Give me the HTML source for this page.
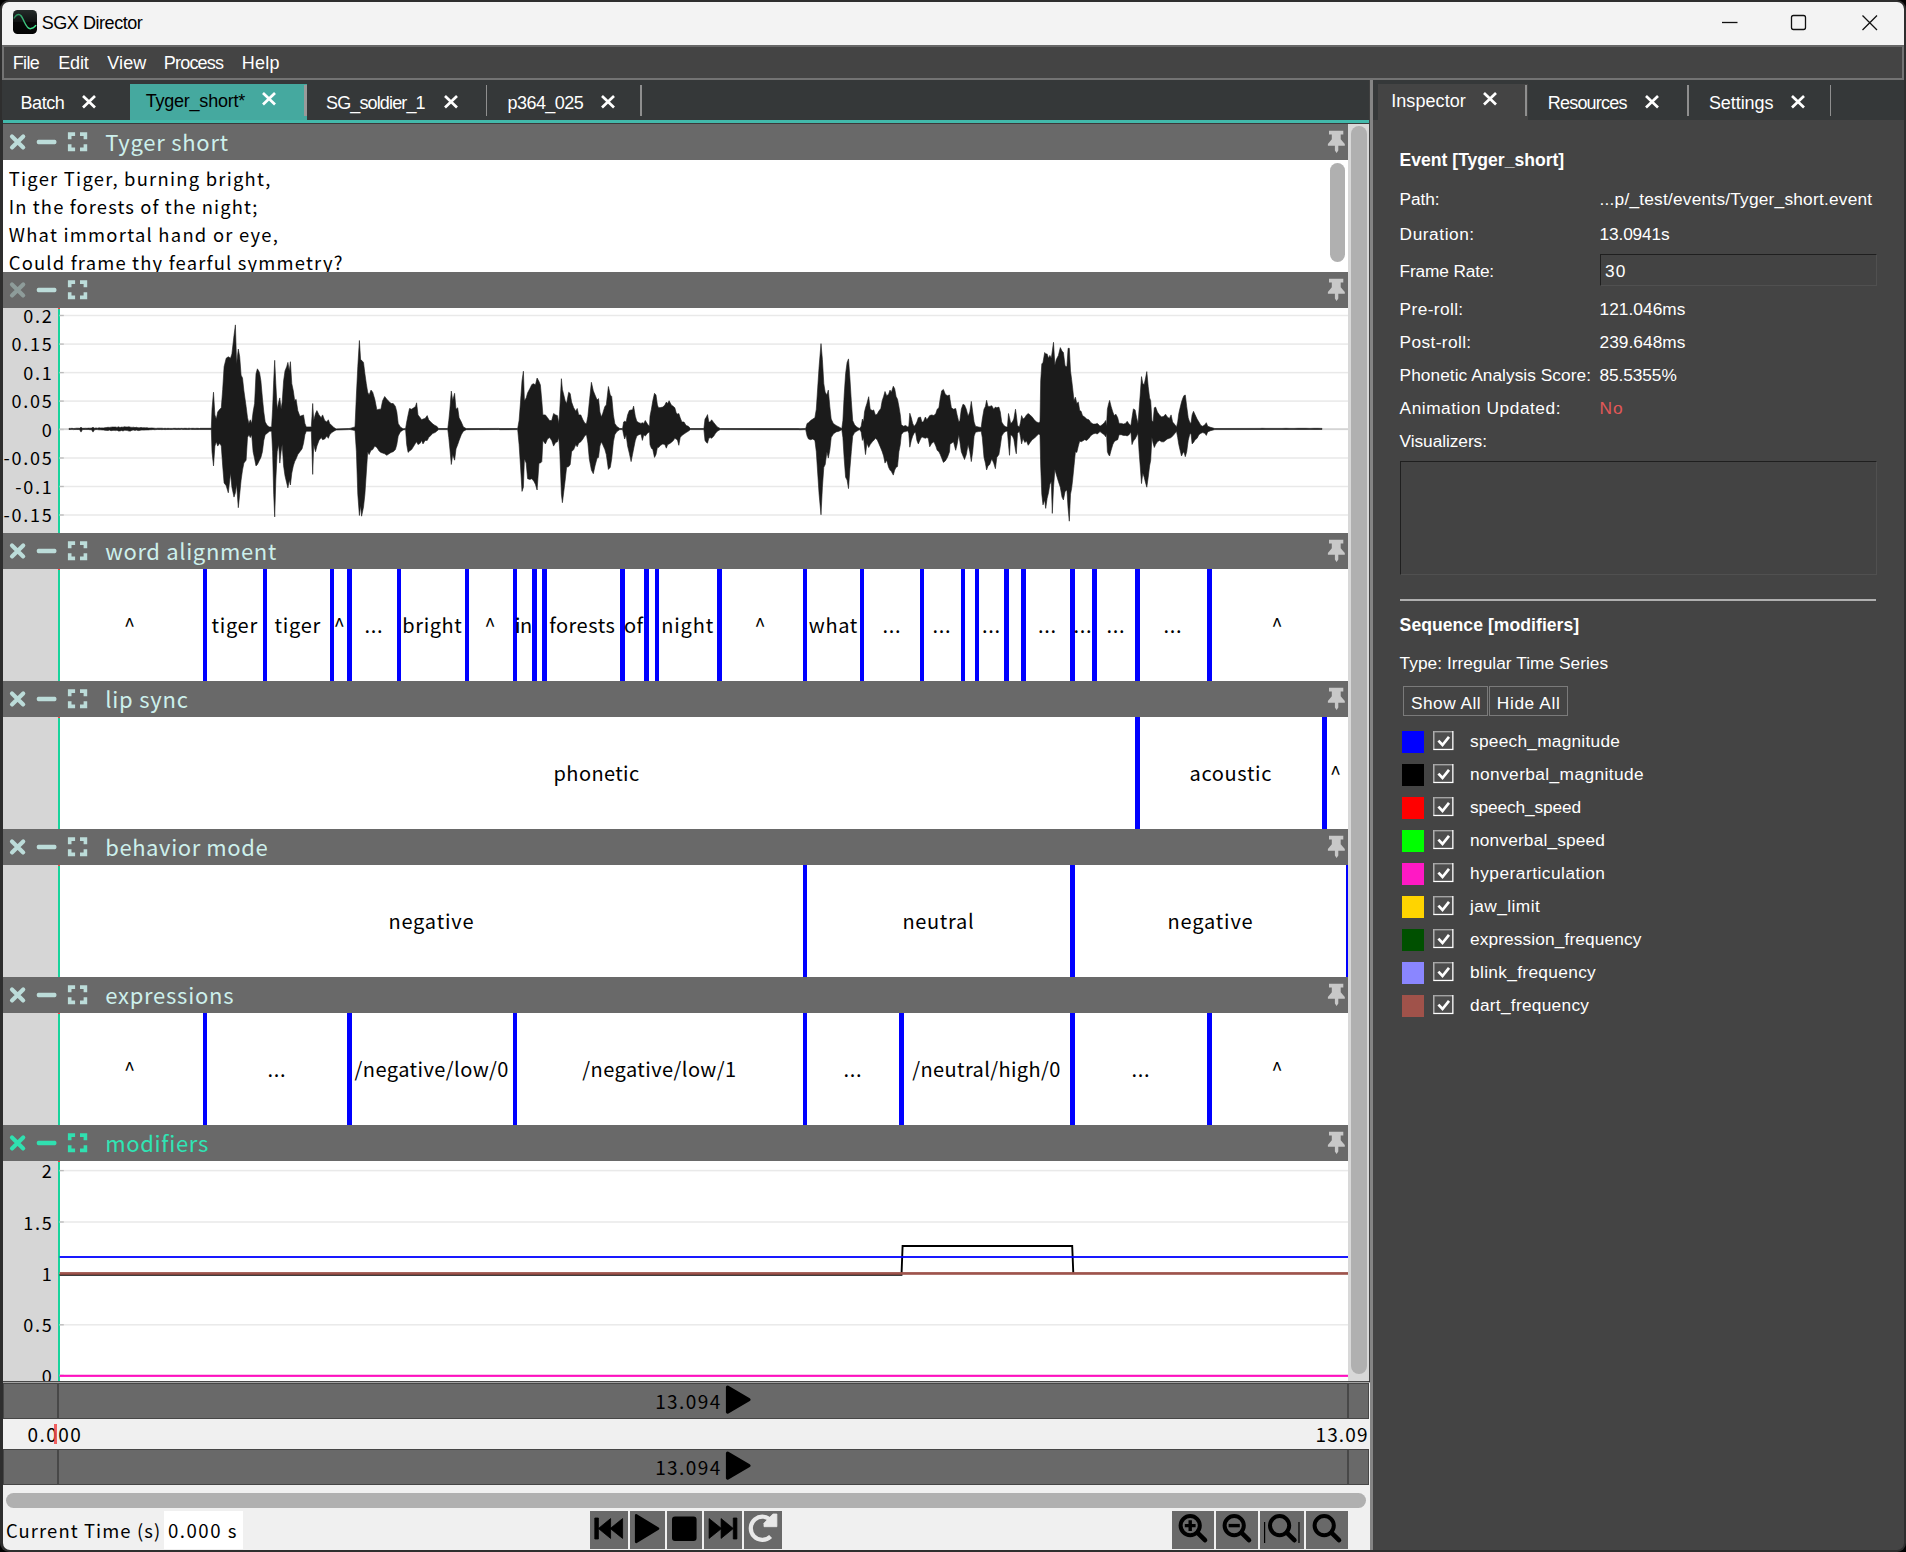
<!DOCTYPE html>
<html><head><meta charset="utf-8"><title>SGX Director</title><style>
html,body{margin:0;padding:0;background:#000;}
body{width:1906px;height:1552px;overflow:hidden;position:relative;font-family:'Liberation Sans',sans-serif;}
#win{position:absolute;left:0;top:0;width:1906px;height:1552px;background:#2e2e2e;border-radius:9px;overflow:hidden;}
.t{position:absolute;white-space:nowrap;}
</style></head><body>
<div id="win">
<div style="position:absolute;left:2px;top:2px;width:1902px;height:43px;background:#f3f3f3;border-radius:7px 7px 0 0;"></div>
<svg style="position:absolute;left:13px;top:9.9px" width="24" height="24" viewBox="0 0 24 24"><defs><linearGradient id="ig" x1="0" y1="0" x2="0" y2="1"><stop offset="0" stop-color="#252b2a"/><stop offset="0.48" stop-color="#101313"/><stop offset="0.5" stop-color="#070808"/><stop offset="1" stop-color="#030303"/></linearGradient><linearGradient id="sg" x1="0" y1="0" x2="1" y2="0"><stop offset="0" stop-color="#287f54"/><stop offset="0.5" stop-color="#3cc07c"/><stop offset="1" stop-color="#44ee92"/></linearGradient></defs><rect x="0" y="0" width="24" height="24" rx="4.6" fill="url(#ig)"/><path d="M0.9 8.5C2.5 5.5,4 4.4,5.7 4.4C8.5 4.4,9.8 8.5,11.2 11.7C12.8 15.2,14.3 18.7,17.3 18.7C19.5 18.7,21.3 17.2,23.1 15.1" fill="none" stroke="url(#sg)" stroke-width="1.45"/></svg>
<span id="t1" class="t" style="top:14.10px;font-size:18px;line-height:18px;color:#000;letter-spacing:-0.446px;left:41.69px;">SGX Director</span>
<svg style="position:absolute;left:1700px;top:2px" width="204" height="43" viewBox="0 0 204 43" fill="none" stroke="#111" stroke-width="1.3"><path d="M22 20.5H37.5"/><rect x="91.5" y="13.5" width="14" height="14" rx="2"/><path d="M162.5 13.5L177 28M177 13.5L162.5 28"/></svg>
<div style="position:absolute;left:2px;top:45px;width:1902px;height:35px;background:#444444;box-sizing:border-box;border:2.1px solid #737373;border-top-color:#676767;"></div>
<span id="t2" class="t" style="top:54.00px;font-size:18px;line-height:18px;color:#fff;letter-spacing:-0.632px;left:12.69px;">File</span>
<span id="t3" class="t" style="top:54.00px;font-size:18px;line-height:18px;color:#fff;letter-spacing:-0.137px;left:58.19px;">Edit</span>
<span id="t4" class="t" style="top:54.00px;font-size:18px;line-height:18px;color:#fff;letter-spacing:0.139px;left:107.19px;">View</span>
<span id="t5" class="t" style="top:54.00px;font-size:18px;line-height:18px;color:#fff;letter-spacing:-0.769px;left:163.69px;">Process</span>
<span id="t6" class="t" style="top:54.00px;font-size:18px;line-height:18px;color:#fff;letter-spacing:0.196px;left:241.79px;">Help</span>
<div style="position:absolute;left:2px;top:80px;width:1902px;height:40px;background:#353839;"></div>
<div style="position:absolute;left:130px;top:84px;width:177px;height:36px;background:#45a99f;"></div>
<span id="t7" class="t" style="top:94.20px;font-size:18px;line-height:18px;color:#fff;letter-spacing:-0.478px;left:20.59px;">Batch</span>
<svg style="position:absolute;left:81px;top:93.65px" width="16" height="16" viewBox="0 0 16 16"><path d="M2 2L14 13.5M14 2L2 13.5" stroke="#fff" stroke-width="2.7" fill="none"/></svg>
<span id="t8" class="t" style="top:92.00px;font-size:18px;line-height:18px;color:#000;letter-spacing:-0.240px;left:145.79px;">Tyger_short*</span>
<svg style="position:absolute;left:261px;top:91.35px" width="16" height="16" viewBox="0 0 16 16"><path d="M2 2L14 13.5M14 2L2 13.5" stroke="#fff" stroke-width="2.7" fill="none"/></svg>
<div style="position:absolute;left:304px;top:85px;width:2.5px;height:31px;background:#9a9a9a;"></div>
<span id="t9" class="t" style="top:94.00px;font-size:18px;line-height:18px;color:#fff;letter-spacing:-0.860px;left:325.99px;">SG_soldier_1</span>
<svg style="position:absolute;left:443.1px;top:93.65px" width="16" height="16" viewBox="0 0 16 16"><path d="M2 2L14 13.5M14 2L2 13.5" stroke="#fff" stroke-width="2.7" fill="none"/></svg>
<div style="position:absolute;left:485.75px;top:85px;width:1.5px;height:31px;background:#8f8f8f;"></div>
<span id="t10" class="t" style="top:94.00px;font-size:18px;line-height:18px;color:#fff;letter-spacing:-0.539px;left:507.49px;">p364_025</span>
<svg style="position:absolute;left:600.1px;top:93.65px" width="16" height="16" viewBox="0 0 16 16"><path d="M2 2L14 13.5M14 2L2 13.5" stroke="#fff" stroke-width="2.7" fill="none"/></svg>
<div style="position:absolute;left:640.25px;top:85px;width:1.5px;height:31px;background:#8f8f8f;"></div>
<div style="position:absolute;left:3px;top:120px;width:1367px;height:3.2px;background:#42b9ab;"></div>
<div style="position:absolute;left:3px;top:123.2px;width:1367px;height:0.8px;background:#3a3a3a;"></div>
<div style="position:absolute;left:1378px;top:84px;width:149.5px;height:36px;background:#444444;"></div>
<span id="t11" class="t" style="top:92.00px;font-size:18px;line-height:18px;color:#fff;letter-spacing:0.072px;left:1391.19px;">Inspector</span>
<svg style="position:absolute;left:1482px;top:91.45px" width="16" height="16" viewBox="0 0 16 16"><path d="M2 2L14 13.5M14 2L2 13.5" stroke="#fff" stroke-width="2.7" fill="none"/></svg>
<div style="position:absolute;left:1525.25px;top:85px;width:1.5px;height:31px;background:#8f8f8f;"></div>
<span id="t12" class="t" style="top:93.70px;font-size:18px;line-height:18px;color:#fff;letter-spacing:-0.803px;left:1547.79px;">Resources</span>
<svg style="position:absolute;left:1644px;top:93.65px" width="16" height="16" viewBox="0 0 16 16"><path d="M2 2L14 13.5M14 2L2 13.5" stroke="#fff" stroke-width="2.7" fill="none"/></svg>
<div style="position:absolute;left:1687.25px;top:85px;width:1.5px;height:31px;background:#8f8f8f;"></div>
<span id="t13" class="t" style="top:93.70px;font-size:18px;line-height:18px;color:#fff;letter-spacing:-0.061px;left:1708.89px;">Settings</span>
<svg style="position:absolute;left:1790.2px;top:93.65px" width="16" height="16" viewBox="0 0 16 16"><path d="M2 2L14 13.5M14 2L2 13.5" stroke="#fff" stroke-width="2.7" fill="none"/></svg>
<div style="position:absolute;left:1829.85px;top:85px;width:1.5px;height:31px;background:#8f8f8f;"></div>
<div style="position:absolute;left:1368.7px;top:80px;width:1.6px;height:1301px;background:#404040;"></div>
<div style="position:absolute;left:1370.2px;top:80px;width:2.9px;height:1470px;background:#858585;"></div>
<div style="position:absolute;left:1373px;top:120px;width:531px;height:1430px;background:#444444;border-radius:0 0 7px 0;"></div>
<div style="position:absolute;left:3px;top:124px;width:1345px;height:36px;background:#696969;"></div>
<svg style="position:absolute;left:3px;top:124px" width="100" height="36" viewBox="0 0 100 36" fill="none"><path d="M9 12.4L20.2 23.4M20.2 12.4L9 23.4" stroke="#bcdcd9" stroke-width="4.2" stroke-linecap="round"/><rect x="33.8" y="15.8" width="19.6" height="4.4" rx="1.6" fill="#bcdcd9"/><path d="M66.7 15.3V10.1H72.1M77 10.1H82.4V15.3M82.4 20.2V25.4H77M72.1 25.4H66.7V20.2" stroke="#bcdcd9" stroke-width="3.6"/></svg>
<span id="t14" class="t" style="top:130.24px;font-size:22px;line-height:22px;color:#cdf0ec;font-family:'Noto Sans CJK SC','Noto Sans CJK JP','Liberation Sans',sans-serif;letter-spacing:0.741px;left:105.21px;">Tyger short</span>
<svg style="position:absolute;left:1327px;top:130.3px" width="19" height="24" viewBox="0 0 19 24"><path d="M2 0.8H16.3V4.6H13.7V9.2L17.8 14V15.7H11.3V20.5L9.6 23L7.9 20.5V15.7H0.9V14L4.8 9.2V4.6H2Z" fill="#c8c8c8"/></svg>
<div style="position:absolute;left:3px;top:160px;width:1345px;height:112px;background:#ffffff;overflow:hidden;"></div>
<span id="t15" class="t" style="top:168.69px;font-size:18.4px;line-height:18.4px;color:#000;font-family:'Noto Sans CJK SC','Noto Sans CJK JP','Liberation Sans',sans-serif;letter-spacing:1.242px;left:8.77px;">Tiger Tiger, burning bright,</span>
<span id="t16" class="t" style="top:196.69px;font-size:18.4px;line-height:18.4px;color:#000;font-family:'Noto Sans CJK SC','Noto Sans CJK JP','Liberation Sans',sans-serif;letter-spacing:1.112px;left:8.77px;">In the forests of the night;</span>
<span id="t17" class="t" style="top:224.69px;font-size:18.4px;line-height:18.4px;color:#000;font-family:'Noto Sans CJK SC','Noto Sans CJK JP','Liberation Sans',sans-serif;letter-spacing:1.255px;left:8.77px;">What immortal hand or eye,</span>
<span id="t18" class="t" style="top:252.69px;font-size:18.4px;line-height:18.4px;color:#000;font-family:'Noto Sans CJK SC','Noto Sans CJK JP','Liberation Sans',sans-serif;letter-spacing:1.187px;left:8.77px;">Could frame thy fearful symmetry?</span>
<div style="position:absolute;left:3px;top:272px;width:1345px;height:10px;background:rgba(0,0,0,0);"></div>
<div style="position:absolute;left:1330px;top:163px;width:15px;height:99px;background:#b0b0b0;border-radius:7.5px;"></div>
<div style="position:absolute;left:3px;top:272px;width:1345px;height:36px;background:#696969;"></div>
<svg style="position:absolute;left:3px;top:272px" width="100" height="36" viewBox="0 0 100 36" fill="none"><path d="M9 12.4L20.2 23.4M20.2 12.4L9 23.4" stroke="#8e9c9a" stroke-width="4.2" stroke-linecap="round"/><rect x="33.8" y="15.8" width="19.6" height="4.4" rx="1.6" fill="#bcdcd9"/><path d="M66.7 15.3V10.1H72.1M77 10.1H82.4V15.3M82.4 20.2V25.4H77M72.1 25.4H66.7V20.2" stroke="#bcdcd9" stroke-width="3.6"/></svg>
<svg style="position:absolute;left:1327px;top:278.3px" width="19" height="24" viewBox="0 0 19 24"><path d="M2 0.8H16.3V4.6H13.7V9.2L17.8 14V15.7H11.3V20.5L9.6 23L7.9 20.5V15.7H0.9V14L4.8 9.2V4.6H2Z" fill="#c8c8c8"/></svg>
<div style="position:absolute;left:3px;top:308px;width:1345px;height:225px;background:#ffffff;"></div>
<div style="position:absolute;left:3px;top:308px;width:55px;height:225px;background:#d6d6d6;"></div>
<div style="position:absolute;left:58px;top:308px;width:1.6px;height:225px;background:#18d49c;"></div>
<div style="position:absolute;left:58px;top:308px;width:1.6px;height:1.2px;background:#ff4040;"></div>
<svg style="position:absolute;left:59px;top:308px" width="1289" height="225" viewBox="59 308 1289 225"><rect x="59.6" y="314.75" width="1288.4" height="1.5" fill="#e9e9e9"/><rect x="59.6" y="314.85" width="4.2" height="1.3" fill="#bcbcbc"/><rect x="59.6" y="343.35" width="1288.4" height="1.5" fill="#e9e9e9"/><rect x="59.6" y="343.45" width="4.2" height="1.3" fill="#bcbcbc"/><rect x="59.6" y="371.85" width="1288.4" height="1.5" fill="#e9e9e9"/><rect x="59.6" y="371.95" width="4.2" height="1.3" fill="#bcbcbc"/><rect x="59.6" y="400.35" width="1288.4" height="1.5" fill="#e9e9e9"/><rect x="59.6" y="400.45" width="4.2" height="1.3" fill="#bcbcbc"/><rect x="59.6" y="428.75" width="1288.4" height="1.5" fill="#e9e9e9"/><rect x="59.6" y="428.85" width="4.2" height="1.3" fill="#bcbcbc"/><rect x="59.6" y="457.25" width="1288.4" height="1.5" fill="#e9e9e9"/><rect x="59.6" y="457.35" width="4.2" height="1.3" fill="#bcbcbc"/><rect x="59.6" y="485.75" width="1288.4" height="1.5" fill="#e9e9e9"/><rect x="59.6" y="485.85" width="4.2" height="1.3" fill="#bcbcbc"/><rect x="59.6" y="514.25" width="1288.4" height="1.5" fill="#e9e9e9"/><rect x="59.6" y="514.35" width="4.2" height="1.3" fill="#bcbcbc"/><rect x="59.6" y="428.4" width="1288.4" height="1.3" fill="#cacaca"/><polygon points="69.0,428.4 70.5,428.4 72.0,428.3 73.5,428.5 75.0,428.4 76.5,428.2 78.0,428.2 79.5,428.3 81.0,427.3 82.5,428.3 84.0,428.3 85.5,428.2 87.0,428.3 88.5,428.1 90.0,428.2 91.5,428.1 93.0,427.3 94.5,428.2 96.0,427.9 97.5,428.2 99.0,427.8 100.5,427.9 102.0,427.9 103.5,427.9 105.0,427.7 106.5,427.5 108.0,427.3 109.5,427.4 111.0,427.2 112.5,427.0 114.0,427.1 115.5,427.0 117.0,427.4 118.5,426.8 120.0,427.5 121.5,427.1 123.0,427.2 124.5,426.7 126.0,427.0 127.5,426.9 129.0,426.8 130.5,427.2 132.0,427.4 133.5,427.2 135.0,427.6 136.5,427.3 138.0,427.8 139.5,427.7 141.0,427.4 142.5,427.7 144.0,427.7 145.5,427.8 147.0,427.7 148.5,428.0 150.0,428.1 151.5,427.9 153.0,428.1 154.5,428.2 156.0,428.4 157.5,428.2 159.0,428.2 160.5,428.2 162.0,428.2 163.5,428.4 165.0,428.3 166.5,428.4 168.0,428.3 169.5,428.4 171.0,428.4 172.5,428.4 174.0,428.3 175.5,428.3 177.0,428.4 178.5,428.3 180.0,428.4 181.5,428.3 183.0,428.4 184.5,428.3 186.0,428.3 187.5,428.4 189.0,428.2 190.5,428.4 192.0,428.3 193.5,428.3 195.0,428.4 196.5,428.3 198.0,428.3 199.5,428.5 200.0,428.3 211.3,428.3 212.0,409.2 213.5,392.2 214.9,414.9 216.3,419.1 217.7,412.0 219.8,409.2 221.3,407.8 222.7,389.4 224.1,366.7 226.2,358.2 228.3,356.8 230.5,358.2 231.9,353.9 234.0,335.5 235.4,324.9 236.6,363.9 238.3,349.0 239.7,356.8 241.1,375.2 242.5,378.0 243.9,390.8 246.1,406.4 247.5,417.7 248.9,423.4 250.3,419.8 251.7,423.4 253.1,412.0 254.6,403.5 256.0,373.8 257.4,368.8 259.5,372.4 260.9,380.9 262.4,397.9 263.8,412.0 265.2,422.0 267.3,425.5 269.4,426.9 271.6,426.9 272.6,409.2 273.7,380.9 274.7,360.3 275.8,383.7 277.2,409.2 278.7,402.1 279.8,397.9 281.1,409.2 282.2,402.1 283.6,380.9 285.0,370.9 286.7,366.7 287.9,362.4 289.3,370.9 290.4,361.7 291.8,383.7 293.3,390.8 294.7,400.7 296.1,399.3 297.8,410.6 299.9,416.3 302.0,415.6 303.5,414.9 304.9,423.4 306.3,426.9 311.3,426.9 312.0,416.3 312.7,403.5 313.7,420.5 315.5,413.5 316.9,410.6 319.0,414.9 321.2,417.7 322.6,414.9 324.7,420.5 326.8,422.0 328.3,419.8 329.7,423.4 331.8,425.5 333.9,427.6 336.1,428.9 348.8,428.5 350.0,428.4 355.0,426.9 356.4,395.0 357.8,366.7 359.4,340.5 360.6,359.6 361.6,360.3 363.5,362.4 364.9,373.8 366.3,383.7 367.7,392.2 369.1,395.0 371.0,390.1 372.7,392.2 374.8,399.3 376.9,409.9 379.1,409.2 380.9,409.2 382.6,400.7 384.7,396.5 386.8,399.3 389.0,401.4 391.1,403.5 393.2,403.5 395.4,406.4 396.8,412.0 398.2,423.4 400.3,426.9 403.1,428.8 405.6,428.5 406.7,422.0 408.1,414.9 409.5,408.5 411.6,409.2 413.8,407.8 415.5,406.4 416.6,402.8 418.0,414.9 420.2,417.7 421.6,419.8 423.0,419.1 425.1,418.4 427.2,415.6 428.7,419.8 430.8,422.0 432.9,424.1 435.0,425.5 436.7,426.2 438.6,428.5 447.8,428.5 448.8,420.5 449.9,409.2 451.3,391.1 452.7,400.7 454.6,393.3 456.0,409.2 457.7,407.8 459.1,417.7 461.3,422.0 463.4,426.9 466.2,428.6 498.8,428.4 500.0,428.6 517.7,428.5 519.1,420.5 520.5,402.1 522.0,380.9 523.4,371.2 524.4,400.7 526.2,397.9 527.6,392.9 529.8,388.7 531.9,384.4 534.0,383.7 535.4,385.1 537.1,378.0 539.0,381.6 540.4,385.1 541.8,400.7 542.9,414.9 545.4,414.9 547.5,417.7 549.6,420.5 551.7,420.5 553.6,413.5 555.6,414.9 557.4,415.6 558.8,423.4 559.8,409.2 561.4,378.7 562.4,389.4 563.8,395.0 565.2,400.7 566.6,403.5 568.7,392.2 570.2,393.6 571.6,402.1 573.7,407.8 575.8,411.3 577.2,408.5 578.7,414.9 580.8,414.9 582.9,419.8 585.0,423.4 586.5,423.4 587.9,416.3 589.3,402.1 591.4,382.3 593.3,390.8 595.0,395.0 597.1,400.0 598.5,398.6 599.9,412.0 601.3,417.0 602.7,413.5 604.9,406.4 606.3,405.0 608.4,386.5 610.3,395.0 611.7,396.5 613.4,414.9 614.8,423.4 616.9,426.5 619.8,428.5 622.6,428.5 623.6,422.0 624.7,421.3 626.1,422.0 627.6,414.9 629.3,410.6 631.1,409.9 632.5,409.9 633.6,406.1 635.3,416.3 636.8,421.3 638.9,422.7 641.0,423.4 642.4,422.7 643.8,423.4 645.3,420.5 647.4,424.1 649.5,426.2 650.0,416.3 651.4,409.2 652.8,400.7 654.5,393.3 656.0,395.0 657.4,405.0 658.5,407.8 660.6,407.5 662.8,407.1 664.9,405.0 666.3,402.1 667.7,403.5 669.1,400.7 671.3,405.0 673.4,406.4 674.8,407.8 676.2,412.7 677.6,414.2 678.8,413.5 680.2,417.7 681.9,422.0 684.0,422.0 686.1,425.5 688.3,426.2 690.4,428.5 703.9,428.5 705.0,419.1 706.4,417.0 707.5,414.6 708.8,422.0 710.2,422.0 711.6,419.8 713.8,422.7 715.5,424.8 717.3,426.9 720.2,428.5 798.8,428.6 800.0,428.7 805.7,428.5 807.1,423.4 808.5,422.7 810.6,420.5 812.8,419.1 814.9,417.7 816.3,409.2 817.7,387.9 819.1,366.7 821.0,343.6 822.4,359.6 823.8,383.7 825.2,392.2 826.9,395.0 828.3,390.1 829.8,406.4 831.2,419.1 833.3,423.4 836.1,425.5 839.0,426.9 841.8,428.6 842.9,420.5 844.2,395.0 845.6,373.8 847.1,362.4 848.5,358.9 849.9,378.0 851.3,400.7 852.7,420.5 854.6,424.8 856.7,426.9 859.5,428.5 861.2,426.2 862.4,419.1 863.5,422.0 864.5,412.0 865.5,407.8 866.9,403.5 868.7,396.7 870.2,409.2 872.3,410.6 873.7,409.9 875.4,414.9 877.2,414.2 878.7,411.3 880.8,408.5 882.2,400.7 883.6,396.5 885.0,391.5 886.7,395.7 888.6,394.3 890.0,390.1 891.4,392.2 893.3,386.2 894.7,388.7 896.1,396.5 897.5,399.3 898.9,406.4 900.3,414.9 901.3,424.8 903.5,426.2 905.6,425.5 907.7,426.9 908.8,426.2 909.8,413.2 911.3,417.7 912.7,423.4 914.1,426.2 915.5,424.8 916.9,422.0 918.3,417.7 920.5,417.0 921.9,422.0 923.3,422.0 925.4,417.0 926.8,419.8 928.3,417.7 929.7,415.6 931.8,414.9 933.9,415.6 935.8,413.5 937.2,409.2 938.9,407.8 940.3,397.9 941.7,390.8 943.4,389.4 945.3,394.3 947.4,395.7 949.5,395.0 950.0,399.3 951.4,407.8 953.5,409.2 955.7,408.5 957.1,414.9 958.8,422.0 959.9,420.5 961.3,409.2 963.0,404.2 964.5,405.0 966.3,409.2 968.1,416.3 969.8,412.0 971.3,401.4 972.7,412.0 974.1,422.0 975.5,426.2 978.3,426.9 981.2,427.6 982.3,419.1 984.0,409.2 985.4,406.4 986.6,400.3 988.0,406.4 989.7,406.4 991.8,405.7 993.7,409.2 995.4,407.1 996.8,407.8 998.9,407.1 1000.3,412.0 1001.7,422.0 1003.9,425.5 1006.0,426.9 1007.4,426.9 1008.5,413.5 1009.5,417.7 1010.7,423.4 1012.4,422.0 1013.8,419.1 1015.5,409.2 1016.3,414.9 1017.5,425.5 1019.4,426.9 1020.6,422.0 1021.6,415.6 1023.0,419.1 1024.8,417.7 1026.5,414.9 1028.2,413.5 1030.1,414.9 1032.2,417.0 1034.3,419.8 1036.5,422.0 1038.6,422.7 1040.0,422.0 1040.7,380.9 1041.8,363.9 1043.0,362.4 1044.7,352.5 1045.7,353.9 1047.1,353.9 1048.5,358.2 1049.9,355.4 1051.3,358.2 1052.3,351.1 1053.5,342.3 1054.9,365.3 1056.3,359.6 1058.4,355.4 1060.3,347.6 1062.0,351.1 1063.4,352.5 1065.1,366.0 1066.9,366.7 1068.1,348.3 1069.3,348.3 1070.5,370.9 1071.6,379.4 1072.6,387.9 1074.0,400.7 1075.4,397.2 1076.8,403.5 1078.3,402.1 1079.7,410.6 1081.1,411.3 1082.5,415.6 1084.6,417.0 1086.8,419.1 1088.9,419.8 1091.0,422.7 1093.1,424.1 1095.3,424.1 1097.4,423.4 1099.5,425.5 1100.0,426.2 1102.1,424.8 1104.3,422.7 1105.7,420.5 1106.5,426.2 1107.4,409.2 1108.5,404.2 1109.6,400.4 1111.1,406.4 1112.8,412.0 1114.2,415.6 1115.9,414.2 1117.7,417.7 1119.1,423.4 1121.3,423.4 1123.4,424.1 1125.5,423.4 1127.2,421.3 1129.1,424.1 1130.9,425.5 1132.0,417.7 1133.4,408.9 1135.1,409.9 1136.6,417.7 1138.0,423.4 1139.1,409.2 1140.2,395.0 1141.5,376.6 1142.8,383.7 1144.2,384.4 1145.6,378.0 1146.8,371.6 1148.2,386.5 1149.6,397.9 1150.7,400.7 1151.9,420.5 1153.1,422.0 1154.3,407.8 1155.6,407.1 1157.4,412.0 1159.5,414.9 1161.6,417.0 1163.8,416.3 1165.5,414.2 1167.3,417.0 1169.4,418.4 1171.1,414.9 1172.6,422.0 1174.4,424.1 1176.5,426.9 1177.7,422.0 1178.8,413.5 1180.1,407.8 1181.5,402.1 1182.9,397.9 1183.9,395.7 1185.3,395.0 1186.7,406.4 1188.2,417.7 1189.6,422.0 1191.0,423.4 1192.1,414.9 1193.5,411.3 1195.2,414.9 1197.1,419.1 1198.9,422.0 1200.9,425.5 1202.7,426.2 1204.9,424.8 1206.3,422.7 1207.7,426.2 1210.5,427.3 1214.8,428.5 1260.0,428.4 1262.0,428.3 1266.0,428.4 1270.0,428.4 1274.0,428.4 1278.0,428.4 1282.0,428.4 1286.0,428.3 1290.0,428.4 1294.0,428.4 1298.0,428.3 1302.0,428.3 1306.0,428.3 1310.0,428.4 1314.0,428.3 1318.0,428.3 1322.0,428.4 1322.0,429.4 1318.0,429.5 1314.0,429.5 1310.0,429.4 1306.0,429.5 1302.0,429.5 1298.0,429.5 1294.0,429.4 1290.0,429.4 1286.0,429.5 1282.0,429.4 1278.0,429.4 1274.0,429.4 1270.0,429.4 1266.0,429.4 1262.0,429.5 1260.0,429.5 1214.8,429.6 1210.5,430.7 1207.7,431.9 1206.3,435.4 1204.9,433.3 1202.7,432.6 1200.9,433.3 1198.9,434.7 1197.1,438.3 1195.2,439.7 1193.5,442.5 1192.1,443.9 1191.0,433.3 1189.6,434.7 1188.2,440.4 1186.7,451.7 1185.3,456.7 1183.9,451.7 1182.9,453.1 1181.5,456.0 1180.1,450.3 1178.8,444.6 1177.7,437.6 1176.5,431.2 1174.4,434.0 1172.6,436.1 1171.1,437.6 1169.4,438.3 1167.3,439.0 1165.5,440.4 1163.8,441.8 1161.6,441.8 1159.5,440.4 1157.4,441.8 1155.6,444.6 1154.3,447.5 1153.1,443.2 1151.9,437.6 1150.7,460.2 1149.6,465.9 1148.2,477.2 1146.8,487.2 1145.6,482.9 1144.2,477.2 1142.8,473.0 1141.5,483.6 1140.2,465.9 1139.1,451.7 1138.0,433.3 1136.6,436.1 1135.1,439.0 1133.4,441.1 1132.0,444.6 1130.9,431.9 1129.1,434.7 1127.2,435.9 1125.5,435.4 1123.4,435.4 1121.3,434.7 1119.1,434.7 1117.7,439.7 1115.9,440.4 1114.2,441.8 1112.8,444.6 1111.1,450.3 1109.6,456.0 1108.5,454.6 1107.4,451.7 1106.5,433.3 1105.7,436.8 1104.3,434.7 1102.1,433.3 1100.0,431.6 1099.5,431.9 1097.4,434.0 1095.3,433.3 1093.1,434.0 1091.0,435.4 1088.9,438.3 1086.8,440.4 1084.6,439.7 1082.5,441.1 1081.1,441.8 1079.7,441.1 1078.3,446.1 1076.8,452.4 1075.4,451.7 1074.0,465.9 1072.6,480.1 1071.6,488.6 1070.5,494.2 1069.3,521.2 1068.1,508.4 1066.9,490.0 1065.1,491.4 1063.4,499.9 1062.0,497.1 1060.3,487.2 1058.4,481.5 1056.3,474.4 1054.9,469.4 1053.5,487.2 1052.3,513.4 1051.3,481.5 1049.9,484.3 1048.5,492.8 1047.1,498.5 1045.7,508.4 1044.7,499.9 1043.0,504.9 1041.8,494.2 1040.7,465.9 1040.0,434.7 1038.6,434.0 1036.5,436.1 1034.3,438.3 1032.2,439.7 1030.1,442.5 1028.2,445.3 1026.5,441.1 1024.8,442.5 1023.0,438.3 1021.6,443.9 1020.6,437.6 1019.4,431.2 1017.5,433.3 1016.3,453.8 1015.5,450.3 1013.8,439.0 1012.4,436.1 1010.7,434.7 1009.5,455.3 1008.5,444.6 1007.4,431.2 1006.0,431.2 1003.9,432.6 1001.7,436.1 1000.3,446.1 998.9,454.6 996.8,457.4 995.4,468.7 993.7,463.1 991.8,458.8 989.7,464.5 988.0,465.9 986.6,469.9 985.4,463.1 984.0,457.4 982.3,437.6 981.2,431.2 978.3,431.6 975.5,432.2 974.1,436.1 972.7,451.7 971.3,461.6 969.8,451.7 968.1,444.6 966.3,454.6 964.5,459.5 963.0,456.0 961.3,451.7 959.9,441.8 958.8,434.7 957.1,444.6 955.7,450.3 953.5,441.8 951.4,443.2 950.0,444.6 949.5,451.7 947.4,457.4 945.3,460.9 943.4,462.4 941.7,458.1 940.3,454.6 938.9,451.7 937.2,450.3 935.8,446.1 933.9,441.8 931.8,443.2 929.7,446.8 928.3,438.3 926.8,437.6 925.4,438.3 923.3,437.6 921.9,436.8 920.5,439.0 918.3,443.9 916.9,440.4 915.5,431.9 914.1,433.3 912.7,436.1 911.3,440.4 909.8,447.2 908.8,433.3 907.7,430.7 905.6,431.6 903.5,431.9 901.3,434.7 900.3,444.6 898.9,451.7 897.5,466.6 896.1,467.3 894.7,470.1 893.3,475.1 891.4,471.6 890.0,470.1 888.6,467.3 886.7,460.2 885.0,463.1 883.6,456.0 882.2,451.7 880.8,448.2 878.7,443.2 877.2,439.7 875.4,438.3 873.7,440.4 872.3,441.8 870.2,444.6 868.7,447.5 866.9,443.2 865.5,454.6 864.5,446.1 863.5,437.6 862.4,440.4 861.2,431.9 859.5,429.6 856.7,431.2 854.6,432.6 852.7,436.1 851.3,451.7 849.9,468.7 848.5,488.6 847.1,480.1 845.6,477.2 844.2,458.8 842.9,437.6 841.8,429.7 839.0,431.2 836.1,431.9 833.3,434.0 831.2,437.6 829.8,450.3 828.3,458.1 826.9,451.7 825.2,464.5 823.8,467.3 822.4,487.2 821.0,514.8 819.1,494.2 817.7,473.0 816.3,451.7 814.9,440.4 812.8,439.0 810.6,439.7 808.5,439.0 807.1,436.1 805.7,429.6 800.0,429.8 798.8,429.7 720.2,429.6 717.3,431.2 715.5,433.3 713.8,436.1 711.6,438.3 710.2,437.6 708.8,438.3 707.5,443.2 706.4,442.5 705.0,440.4 703.9,429.6 690.4,429.6 688.3,431.2 686.1,432.6 684.0,434.0 681.9,435.4 680.2,437.6 678.8,445.3 677.6,440.4 676.2,439.0 674.8,438.3 673.4,440.4 671.3,442.5 669.1,443.9 667.7,444.6 666.3,448.2 664.9,444.6 662.8,443.9 660.6,445.3 658.5,447.5 657.4,447.5 656.0,454.6 654.5,457.4 652.8,449.6 651.4,448.2 650.0,444.6 649.5,431.9 647.4,433.3 645.3,436.1 643.8,434.7 642.4,440.4 641.0,434.0 638.9,434.7 636.8,436.1 635.3,440.4 633.6,448.9 632.5,454.6 631.1,461.6 629.3,453.1 627.6,446.1 626.1,434.7 624.7,439.0 623.6,434.7 622.6,429.6 619.8,429.6 616.9,431.6 614.8,434.7 613.4,441.8 611.7,458.8 610.3,467.3 608.4,469.4 606.3,454.6 604.9,449.6 602.7,444.6 601.3,441.8 599.9,446.1 598.5,457.4 597.1,458.1 595.0,465.9 593.3,473.7 591.4,470.1 589.3,458.8 587.9,443.2 586.5,434.7 585.0,435.4 582.9,439.0 580.8,441.8 578.7,443.2 577.2,446.8 575.8,444.6 573.7,449.6 571.6,451.7 570.2,464.5 568.7,466.6 566.6,467.3 565.2,480.1 563.8,491.4 562.4,502.7 561.4,494.2 559.8,451.7 558.8,437.6 557.4,441.8 555.6,442.5 553.6,446.1 551.7,440.4 549.6,437.6 547.5,439.0 545.4,443.9 542.9,440.4 541.8,461.6 540.4,463.1 539.0,463.1 537.1,490.0 535.4,484.3 534.0,481.5 531.9,478.7 529.8,479.4 527.6,478.7 526.2,463.1 524.4,458.8 523.4,487.2 522.0,491.4 520.5,465.9 519.1,444.6 517.7,429.6 500.0,429.7 498.8,429.5 466.2,429.7 463.4,431.2 461.3,434.7 459.1,440.4 457.7,444.6 456.0,448.9 454.6,460.2 452.7,454.6 451.3,464.5 449.9,448.9 448.8,437.6 447.8,429.6 438.6,429.6 436.7,431.2 435.0,432.6 432.9,433.3 430.8,435.4 428.7,437.6 427.2,440.4 425.1,440.4 423.0,443.9 421.6,440.4 420.2,443.2 418.0,444.6 416.6,441.8 415.5,443.2 413.8,446.1 411.6,449.6 409.5,451.0 408.1,452.4 406.7,444.6 405.6,429.6 403.1,429.9 400.3,431.9 398.2,436.1 396.8,444.6 395.4,449.6 393.2,451.7 391.1,452.4 389.0,453.8 386.8,455.3 384.7,453.8 382.6,453.1 380.9,452.4 379.1,451.0 376.9,447.5 374.8,446.1 372.7,449.6 371.0,450.3 369.1,454.6 367.7,451.7 366.3,473.0 364.9,494.2 363.5,507.0 361.6,516.2 360.6,505.6 359.4,515.5 357.8,494.2 356.4,451.7 355.0,430.5 350.0,429.5 348.8,429.6 336.1,430.0 333.9,431.2 331.8,432.6 329.7,434.7 328.3,438.3 326.8,436.1 324.7,439.0 322.6,439.7 321.2,437.6 319.0,440.4 316.9,446.1 315.5,451.7 313.7,444.6 312.7,474.4 312.0,451.7 311.3,431.2 306.3,431.2 304.9,434.7 303.5,443.2 302.0,448.9 299.9,451.7 297.8,454.6 296.1,458.8 294.7,461.6 293.3,465.9 291.8,473.0 290.4,485.0 289.3,480.1 287.9,487.9 286.7,482.9 285.0,475.8 283.6,465.9 282.2,444.6 281.1,451.7 279.8,463.1 278.7,444.6 277.2,451.7 275.8,480.1 274.7,516.9 273.7,494.2 272.6,451.7 271.6,431.2 269.4,431.2 267.3,433.3 265.2,434.7 263.8,440.4 262.4,451.7 260.9,457.4 259.5,460.2 257.4,464.5 256.0,465.9 254.6,458.8 253.1,451.7 251.7,434.7 250.3,437.6 248.9,434.7 247.5,437.6 246.1,460.2 243.9,463.1 242.5,470.1 241.1,480.1 239.7,494.2 238.3,507.7 236.6,484.3 235.4,492.8 234.0,497.1 231.9,487.2 230.5,473.0 228.3,492.8 226.2,485.7 224.1,482.9 222.7,465.9 221.3,446.1 219.8,443.2 217.7,446.1 216.3,441.8 214.9,446.1 213.5,465.9 212.0,451.7 211.3,429.4 200.0,429.4 199.5,429.4 198.0,429.4 196.5,429.5 195.0,429.4 193.5,429.5 192.0,429.4 190.5,429.3 189.0,429.4 187.5,429.5 186.0,429.4 184.5,429.4 183.0,429.4 181.5,429.3 180.0,429.4 178.5,429.4 177.0,429.4 175.5,429.5 174.0,429.3 172.5,429.4 171.0,429.5 169.5,429.4 168.0,429.4 166.5,429.5 165.0,429.6 163.5,429.4 162.0,429.6 160.5,429.5 159.0,429.5 157.5,429.4 156.0,429.6 154.5,429.7 153.0,429.5 151.5,429.7 150.0,429.7 148.5,429.9 147.0,429.9 145.5,430.0 144.0,430.1 142.5,430.1 141.0,430.1 139.5,430.5 138.0,430.6 136.5,430.1 135.0,430.4 133.5,430.1 132.0,430.2 130.5,431.1 129.0,431.1 127.5,430.6 126.0,430.3 124.5,430.3 123.0,431.0 121.5,430.4 120.0,431.0 118.5,431.1 117.0,430.2 115.5,430.6 114.0,430.3 112.5,430.5 111.0,430.7 109.5,430.1 108.0,430.5 106.5,430.4 105.0,430.3 103.5,430.0 102.0,429.9 100.5,429.8 99.0,429.8 97.5,429.6 96.0,429.5 94.5,429.8 93.0,432.1 91.5,429.7 90.0,429.7 88.5,429.5 87.0,429.4 85.5,429.5 84.0,429.4 82.5,429.6 81.0,432.1 79.5,429.4 78.0,429.5 76.5,429.5 75.0,429.4 73.5,429.6 72.0,429.3 70.5,429.5 69.0,429.5" fill="#1b1b1b" stroke="#1b1b1b" stroke-width="0.6" stroke-linejoin="round"/></svg>
<span id="t19" class="t" style="top:305.76px;font-size:18px;line-height:18px;color:#000;font-family:'Noto Sans CJK SC','Noto Sans CJK JP','Liberation Sans',sans-serif;letter-spacing:1.800px;left:23.23px;">0.2</span>
<span id="t20" class="t" style="top:334.36px;font-size:18px;line-height:18px;color:#000;font-family:'Noto Sans CJK SC','Noto Sans CJK JP','Liberation Sans',sans-serif;letter-spacing:1.800px;left:11.43px;">0.15</span>
<span id="t21" class="t" style="top:362.86px;font-size:18px;line-height:18px;color:#000;font-family:'Noto Sans CJK SC','Noto Sans CJK JP','Liberation Sans',sans-serif;letter-spacing:1.800px;left:23.23px;">0.1</span>
<span id="t22" class="t" style="top:391.36px;font-size:18px;line-height:18px;color:#000;font-family:'Noto Sans CJK SC','Noto Sans CJK JP','Liberation Sans',sans-serif;letter-spacing:1.800px;left:11.43px;">0.05</span>
<span id="t23" class="t" style="top:419.76px;font-size:18px;line-height:18px;color:#000;font-family:'Noto Sans CJK SC','Noto Sans CJK JP','Liberation Sans',sans-serif;letter-spacing:1.800px;left:41.81px;">0</span>
<span id="t24" class="t" style="top:448.26px;font-size:18px;line-height:18px;color:#000;font-family:'Noto Sans CJK SC','Noto Sans CJK JP','Liberation Sans',sans-serif;letter-spacing:1.800px;left:3.38px;">-0.05</span>
<span id="t25" class="t" style="top:476.76px;font-size:18px;line-height:18px;color:#000;font-family:'Noto Sans CJK SC','Noto Sans CJK JP','Liberation Sans',sans-serif;letter-spacing:1.800px;left:15.18px;">-0.1</span>
<span id="t26" class="t" style="top:505.26px;font-size:18px;line-height:18px;color:#000;font-family:'Noto Sans CJK SC','Noto Sans CJK JP','Liberation Sans',sans-serif;letter-spacing:1.800px;left:3.38px;">-0.15</span>
<div style="position:absolute;left:3px;top:533px;width:1345px;height:36px;background:#696969;"></div>
<svg style="position:absolute;left:3px;top:533px" width="100" height="36" viewBox="0 0 100 36" fill="none"><path d="M9 12.4L20.2 23.4M20.2 12.4L9 23.4" stroke="#bcdcd9" stroke-width="4.2" stroke-linecap="round"/><rect x="33.8" y="15.8" width="19.6" height="4.4" rx="1.6" fill="#bcdcd9"/><path d="M66.7 15.3V10.1H72.1M77 10.1H82.4V15.3M82.4 20.2V25.4H77M72.1 25.4H66.7V20.2" stroke="#bcdcd9" stroke-width="3.6"/></svg>
<span id="t27" class="t" style="top:539.24px;font-size:22px;line-height:22px;color:#cdf0ec;font-family:'Noto Sans CJK SC','Noto Sans CJK JP','Liberation Sans',sans-serif;letter-spacing:0.649px;left:105.21px;">word alignment</span>
<svg style="position:absolute;left:1327px;top:539.3px" width="19" height="24" viewBox="0 0 19 24"><path d="M2 0.8H16.3V4.6H13.7V9.2L17.8 14V15.7H11.3V20.5L9.6 23L7.9 20.5V15.7H0.9V14L4.8 9.2V4.6H2Z" fill="#c8c8c8"/></svg>
<div style="position:absolute;left:3px;top:569px;width:1345px;height:112px;background:#ffffff;overflow:hidden;"></div>
<div style="position:absolute;left:3px;top:569px;width:55px;height:112px;background:#d6d6d6;"></div>
<div style="position:absolute;left:58px;top:569px;width:1.6px;height:112px;background:#18d49c;"></div>
<div style="position:absolute;left:58px;top:569px;width:1.6px;height:1.2px;background:#ff4040;"></div>
<div style="position:absolute;left:202.8px;top:569px;width:4.4px;height:112px;background:#0000ff;"></div>
<div style="position:absolute;left:262.8px;top:569px;width:4.4px;height:112px;background:#0000ff;"></div>
<div style="position:absolute;left:329.8px;top:569px;width:4.4px;height:112px;background:#0000ff;"></div>
<div style="position:absolute;left:347.3px;top:569px;width:4.4px;height:112px;background:#0000ff;"></div>
<div style="position:absolute;left:396.8px;top:569px;width:4.4px;height:112px;background:#0000ff;"></div>
<div style="position:absolute;left:464.8px;top:569px;width:4.4px;height:112px;background:#0000ff;"></div>
<div style="position:absolute;left:512.8px;top:569px;width:4.4px;height:112px;background:#0000ff;"></div>
<div style="position:absolute;left:532.3px;top:569px;width:4.4px;height:112px;background:#0000ff;"></div>
<div style="position:absolute;left:542.3px;top:569px;width:4.4px;height:112px;background:#0000ff;"></div>
<div style="position:absolute;left:620.3px;top:569px;width:4.4px;height:112px;background:#0000ff;"></div>
<div style="position:absolute;left:644.3px;top:569px;width:4.4px;height:112px;background:#0000ff;"></div>
<div style="position:absolute;left:654.8px;top:569px;width:4.4px;height:112px;background:#0000ff;"></div>
<div style="position:absolute;left:717.3px;top:569px;width:4.4px;height:112px;background:#0000ff;"></div>
<div style="position:absolute;left:802.8px;top:569px;width:4.4px;height:112px;background:#0000ff;"></div>
<div style="position:absolute;left:859.8px;top:569px;width:4.4px;height:112px;background:#0000ff;"></div>
<div style="position:absolute;left:919.8px;top:569px;width:4.4px;height:112px;background:#0000ff;"></div>
<div style="position:absolute;left:960.8px;top:569px;width:4.4px;height:112px;background:#0000ff;"></div>
<div style="position:absolute;left:974.8px;top:569px;width:4.4px;height:112px;background:#0000ff;"></div>
<div style="position:absolute;left:1004.3px;top:569px;width:4.4px;height:112px;background:#0000ff;"></div>
<div style="position:absolute;left:1021.3px;top:569px;width:4.4px;height:112px;background:#0000ff;"></div>
<div style="position:absolute;left:1070.3px;top:569px;width:4.4px;height:112px;background:#0000ff;"></div>
<div style="position:absolute;left:1092.3px;top:569px;width:4.4px;height:112px;background:#0000ff;"></div>
<div style="position:absolute;left:1135.3px;top:569px;width:4.4px;height:112px;background:#0000ff;"></div>
<div style="position:absolute;left:1207.3px;top:569px;width:4.4px;height:112px;background:#0000ff;"></div>
<span id="t28" class="t" style="top:614.70px;font-size:20px;line-height:20px;color:#000;font-family:'Noto Sans CJK SC','Noto Sans CJK JP','Liberation Sans',sans-serif;letter-spacing:0.720px;left:123.95px;">^</span>
<span id="t29" class="t" style="top:614.70px;font-size:20px;line-height:20px;color:#000;font-family:'Noto Sans CJK SC','Noto Sans CJK JP','Liberation Sans',sans-serif;letter-spacing:0.731px;left:211.40px;">tiger</span>
<span id="t30" class="t" style="top:614.70px;font-size:20px;line-height:20px;color:#000;font-family:'Noto Sans CJK SC','Noto Sans CJK JP','Liberation Sans',sans-serif;letter-spacing:0.731px;left:274.60px;">tiger</span>
<span id="t31" class="t" style="top:614.70px;font-size:20px;line-height:20px;color:#000;font-family:'Noto Sans CJK SC','Noto Sans CJK JP','Liberation Sans',sans-serif;letter-spacing:0.720px;left:333.75px;">^</span>
<span id="t32" class="t" style="top:614.70px;font-size:20px;line-height:20px;color:#000;font-family:'Noto Sans CJK SC','Noto Sans CJK JP','Liberation Sans',sans-serif;letter-spacing:0.720px;left:364.44px;">...</span>
<span id="t33" class="t" style="top:614.70px;font-size:20px;line-height:20px;color:#000;font-family:'Noto Sans CJK SC','Noto Sans CJK JP','Liberation Sans',sans-serif;letter-spacing:0.581px;left:402.35px;">bright</span>
<span id="t34" class="t" style="top:614.70px;font-size:20px;line-height:20px;color:#000;font-family:'Noto Sans CJK SC','Noto Sans CJK JP','Liberation Sans',sans-serif;letter-spacing:0.720px;left:484.45px;">^</span>
<span id="t35" class="t" style="top:614.70px;font-size:20px;line-height:20px;color:#000;font-family:'Noto Sans CJK SC','Noto Sans CJK JP','Liberation Sans',sans-serif;letter-spacing:-0.503px;left:515.10px;">in</span>
<span id="t36" class="t" style="top:614.70px;font-size:20px;line-height:20px;color:#000;font-family:'Noto Sans CJK SC','Noto Sans CJK JP','Liberation Sans',sans-serif;letter-spacing:0.512px;left:549.15px;">forests</span>
<span id="t37" class="t" style="top:614.70px;font-size:20px;line-height:20px;color:#000;font-family:'Noto Sans CJK SC','Noto Sans CJK JP','Liberation Sans',sans-serif;letter-spacing:0.175px;left:624.10px;">of</span>
<span id="t38" class="t" style="top:614.70px;font-size:20px;line-height:20px;color:#000;font-family:'Noto Sans CJK SC','Noto Sans CJK JP','Liberation Sans',sans-serif;letter-spacing:0.832px;left:661.20px;">night</span>
<span id="t39" class="t" style="top:614.70px;font-size:20px;line-height:20px;color:#000;font-family:'Noto Sans CJK SC','Noto Sans CJK JP','Liberation Sans',sans-serif;letter-spacing:0.720px;left:754.45px;">^</span>
<span id="t40" class="t" style="top:614.70px;font-size:20px;line-height:20px;color:#000;font-family:'Noto Sans CJK SC','Noto Sans CJK JP','Liberation Sans',sans-serif;letter-spacing:0.604px;left:808.75px;">what</span>
<span id="t41" class="t" style="top:614.70px;font-size:20px;line-height:20px;color:#000;font-family:'Noto Sans CJK SC','Noto Sans CJK JP','Liberation Sans',sans-serif;letter-spacing:0.720px;left:882.44px;">...</span>
<span id="t42" class="t" style="top:614.70px;font-size:20px;line-height:20px;color:#000;font-family:'Noto Sans CJK SC','Noto Sans CJK JP','Liberation Sans',sans-serif;letter-spacing:0.720px;left:932.44px;">...</span>
<span id="t43" class="t" style="top:614.70px;font-size:20px;line-height:20px;color:#000;font-family:'Noto Sans CJK SC','Noto Sans CJK JP','Liberation Sans',sans-serif;letter-spacing:0.720px;left:981.94px;">...</span>
<span id="t44" class="t" style="top:614.70px;font-size:20px;line-height:20px;color:#000;font-family:'Noto Sans CJK SC','Noto Sans CJK JP','Liberation Sans',sans-serif;letter-spacing:0.720px;left:1037.94px;">...</span>
<span id="t45" class="t" style="top:614.70px;font-size:20px;line-height:20px;color:#000;font-family:'Noto Sans CJK SC','Noto Sans CJK JP','Liberation Sans',sans-serif;letter-spacing:0.720px;left:1073.44px;">...</span>
<span id="t46" class="t" style="top:614.70px;font-size:20px;line-height:20px;color:#000;font-family:'Noto Sans CJK SC','Noto Sans CJK JP','Liberation Sans',sans-serif;letter-spacing:0.720px;left:1106.44px;">...</span>
<span id="t47" class="t" style="top:614.70px;font-size:20px;line-height:20px;color:#000;font-family:'Noto Sans CJK SC','Noto Sans CJK JP','Liberation Sans',sans-serif;letter-spacing:0.720px;left:1163.44px;">...</span>
<span id="t48" class="t" style="top:614.70px;font-size:20px;line-height:20px;color:#000;font-family:'Noto Sans CJK SC','Noto Sans CJK JP','Liberation Sans',sans-serif;letter-spacing:0.720px;left:1271.45px;">^</span>
<div style="position:absolute;left:3px;top:681px;width:1345px;height:36px;background:#696969;"></div>
<svg style="position:absolute;left:3px;top:681px" width="100" height="36" viewBox="0 0 100 36" fill="none"><path d="M9 12.4L20.2 23.4M20.2 12.4L9 23.4" stroke="#bcdcd9" stroke-width="4.2" stroke-linecap="round"/><rect x="33.8" y="15.8" width="19.6" height="4.4" rx="1.6" fill="#bcdcd9"/><path d="M66.7 15.3V10.1H72.1M77 10.1H82.4V15.3M82.4 20.2V25.4H77M72.1 25.4H66.7V20.2" stroke="#bcdcd9" stroke-width="3.6"/></svg>
<span id="t49" class="t" style="top:687.24px;font-size:22px;line-height:22px;color:#cdf0ec;font-family:'Noto Sans CJK SC','Noto Sans CJK JP','Liberation Sans',sans-serif;letter-spacing:0.788px;left:105.21px;">lip sync</span>
<svg style="position:absolute;left:1327px;top:687.3px" width="19" height="24" viewBox="0 0 19 24"><path d="M2 0.8H16.3V4.6H13.7V9.2L17.8 14V15.7H11.3V20.5L9.6 23L7.9 20.5V15.7H0.9V14L4.8 9.2V4.6H2Z" fill="#c8c8c8"/></svg>
<div style="position:absolute;left:3px;top:717px;width:1345px;height:112px;background:#ffffff;overflow:hidden;"></div>
<div style="position:absolute;left:3px;top:717px;width:55px;height:112px;background:#d6d6d6;"></div>
<div style="position:absolute;left:58px;top:717px;width:1.6px;height:112px;background:#18d49c;"></div>
<div style="position:absolute;left:58px;top:717px;width:1.6px;height:1.2px;background:#ff4040;"></div>
<div style="position:absolute;left:1135.3px;top:717px;width:4.4px;height:112px;background:#0000ff;"></div>
<div style="position:absolute;left:1322.3px;top:717px;width:4.4px;height:112px;background:#0000ff;"></div>
<span id="t50" class="t" style="top:762.70px;font-size:20px;line-height:20px;color:#000;font-family:'Noto Sans CJK SC','Noto Sans CJK JP','Liberation Sans',sans-serif;letter-spacing:0.376px;left:553.60px;">phonetic</span>
<span id="t51" class="t" style="top:762.70px;font-size:20px;line-height:20px;color:#000;font-family:'Noto Sans CJK SC','Noto Sans CJK JP','Liberation Sans',sans-serif;letter-spacing:0.628px;left:1189.60px;">acoustic</span>
<span id="t52" class="t" style="top:762.70px;font-size:20px;line-height:20px;color:#000;font-family:'Noto Sans CJK SC','Noto Sans CJK JP','Liberation Sans',sans-serif;letter-spacing:0.720px;left:1329.95px;">^</span>
<div style="position:absolute;left:3px;top:829px;width:1345px;height:36px;background:#696969;"></div>
<svg style="position:absolute;left:3px;top:829px" width="100" height="36" viewBox="0 0 100 36" fill="none"><path d="M9 12.4L20.2 23.4M20.2 12.4L9 23.4" stroke="#bcdcd9" stroke-width="4.2" stroke-linecap="round"/><rect x="33.8" y="15.8" width="19.6" height="4.4" rx="1.6" fill="#bcdcd9"/><path d="M66.7 15.3V10.1H72.1M77 10.1H82.4V15.3M82.4 20.2V25.4H77M72.1 25.4H66.7V20.2" stroke="#bcdcd9" stroke-width="3.6"/></svg>
<span id="t53" class="t" style="top:835.24px;font-size:22px;line-height:22px;color:#cdf0ec;font-family:'Noto Sans CJK SC','Noto Sans CJK JP','Liberation Sans',sans-serif;letter-spacing:0.592px;left:105.21px;">behavior mode</span>
<svg style="position:absolute;left:1327px;top:835.3px" width="19" height="24" viewBox="0 0 19 24"><path d="M2 0.8H16.3V4.6H13.7V9.2L17.8 14V15.7H11.3V20.5L9.6 23L7.9 20.5V15.7H0.9V14L4.8 9.2V4.6H2Z" fill="#c8c8c8"/></svg>
<div style="position:absolute;left:3px;top:865px;width:1345px;height:112px;background:#ffffff;overflow:hidden;"></div>
<div style="position:absolute;left:3px;top:865px;width:55px;height:112px;background:#d6d6d6;"></div>
<div style="position:absolute;left:58px;top:865px;width:1.6px;height:112px;background:#18d49c;"></div>
<div style="position:absolute;left:58px;top:865px;width:1.6px;height:1.2px;background:#ff4040;"></div>
<div style="position:absolute;left:802.8px;top:865px;width:4.4px;height:112px;background:#0000ff;"></div>
<div style="position:absolute;left:1070.3px;top:865px;width:4.4px;height:112px;background:#0000ff;"></div>
<div style="position:absolute;left:1346px;top:865px;width:2px;height:112px;background:#0000ff;"></div>
<span id="t54" class="t" style="top:910.70px;font-size:20px;line-height:20px;color:#000;font-family:'Noto Sans CJK SC','Noto Sans CJK JP','Liberation Sans',sans-serif;letter-spacing:0.813px;left:388.45px;">negative</span>
<span id="t55" class="t" style="top:910.70px;font-size:20px;line-height:20px;color:#000;font-family:'Noto Sans CJK SC','Noto Sans CJK JP','Liberation Sans',sans-serif;letter-spacing:0.679px;left:902.40px;">neutral</span>
<span id="t56" class="t" style="top:910.70px;font-size:20px;line-height:20px;color:#000;font-family:'Noto Sans CJK SC','Noto Sans CJK JP','Liberation Sans',sans-serif;letter-spacing:0.828px;left:1167.50px;">negative</span>
<div style="position:absolute;left:3px;top:977px;width:1345px;height:36px;background:#696969;"></div>
<svg style="position:absolute;left:3px;top:977px" width="100" height="36" viewBox="0 0 100 36" fill="none"><path d="M9 12.4L20.2 23.4M20.2 12.4L9 23.4" stroke="#bcdcd9" stroke-width="4.2" stroke-linecap="round"/><rect x="33.8" y="15.8" width="19.6" height="4.4" rx="1.6" fill="#bcdcd9"/><path d="M66.7 15.3V10.1H72.1M77 10.1H82.4V15.3M82.4 20.2V25.4H77M72.1 25.4H66.7V20.2" stroke="#bcdcd9" stroke-width="3.6"/></svg>
<span id="t57" class="t" style="top:983.24px;font-size:22px;line-height:22px;color:#cdf0ec;font-family:'Noto Sans CJK SC','Noto Sans CJK JP','Liberation Sans',sans-serif;letter-spacing:0.750px;left:105.21px;">expressions</span>
<svg style="position:absolute;left:1327px;top:983.3px" width="19" height="24" viewBox="0 0 19 24"><path d="M2 0.8H16.3V4.6H13.7V9.2L17.8 14V15.7H11.3V20.5L9.6 23L7.9 20.5V15.7H0.9V14L4.8 9.2V4.6H2Z" fill="#c8c8c8"/></svg>
<div style="position:absolute;left:3px;top:1013px;width:1345px;height:112px;background:#ffffff;overflow:hidden;"></div>
<div style="position:absolute;left:3px;top:1013px;width:55px;height:112px;background:#d6d6d6;"></div>
<div style="position:absolute;left:58px;top:1013px;width:1.6px;height:112px;background:#18d49c;"></div>
<div style="position:absolute;left:58px;top:1013px;width:1.6px;height:1.2px;background:#ff4040;"></div>
<div style="position:absolute;left:202.8px;top:1013px;width:4.4px;height:112px;background:#0000ff;"></div>
<div style="position:absolute;left:347.3px;top:1013px;width:4.4px;height:112px;background:#0000ff;"></div>
<div style="position:absolute;left:512.8px;top:1013px;width:4.4px;height:112px;background:#0000ff;"></div>
<div style="position:absolute;left:802.8px;top:1013px;width:4.4px;height:112px;background:#0000ff;"></div>
<div style="position:absolute;left:899.3px;top:1013px;width:4.4px;height:112px;background:#0000ff;"></div>
<div style="position:absolute;left:1070.3px;top:1013px;width:4.4px;height:112px;background:#0000ff;"></div>
<div style="position:absolute;left:1207.3px;top:1013px;width:4.4px;height:112px;background:#0000ff;"></div>
<span id="t58" class="t" style="top:1058.70px;font-size:20px;line-height:20px;color:#000;font-family:'Noto Sans CJK SC','Noto Sans CJK JP','Liberation Sans',sans-serif;letter-spacing:0.720px;left:123.95px;">^</span>
<span id="t59" class="t" style="top:1058.70px;font-size:20px;line-height:20px;color:#000;font-family:'Noto Sans CJK SC','Noto Sans CJK JP','Liberation Sans',sans-serif;letter-spacing:0.720px;left:267.44px;">...</span>
<span id="t60" class="t" style="top:1058.70px;font-size:20px;line-height:20px;color:#000;font-family:'Noto Sans CJK SC','Noto Sans CJK JP','Liberation Sans',sans-serif;letter-spacing:0.441px;left:354.60px;">/negative/low/0</span>
<span id="t61" class="t" style="top:1058.70px;font-size:20px;line-height:20px;color:#000;font-family:'Noto Sans CJK SC','Noto Sans CJK JP','Liberation Sans',sans-serif;letter-spacing:0.434px;left:582.35px;">/negative/low/1</span>
<span id="t62" class="t" style="top:1058.70px;font-size:20px;line-height:20px;color:#000;font-family:'Noto Sans CJK SC','Noto Sans CJK JP','Liberation Sans',sans-serif;letter-spacing:0.720px;left:843.44px;">...</span>
<span id="t63" class="t" style="top:1058.70px;font-size:20px;line-height:20px;color:#000;font-family:'Noto Sans CJK SC','Noto Sans CJK JP','Liberation Sans',sans-serif;letter-spacing:0.371px;left:912.30px;">/neutral/high/0</span>
<span id="t64" class="t" style="top:1058.70px;font-size:20px;line-height:20px;color:#000;font-family:'Noto Sans CJK SC','Noto Sans CJK JP','Liberation Sans',sans-serif;letter-spacing:0.720px;left:1131.44px;">...</span>
<span id="t65" class="t" style="top:1058.70px;font-size:20px;line-height:20px;color:#000;font-family:'Noto Sans CJK SC','Noto Sans CJK JP','Liberation Sans',sans-serif;letter-spacing:0.720px;left:1271.45px;">^</span>
<div style="position:absolute;left:3px;top:1125px;width:1345px;height:36px;background:#696969;"></div>
<svg style="position:absolute;left:3px;top:1125px" width="100" height="36" viewBox="0 0 100 36" fill="none"><path d="M9 12.4L20.2 23.4M20.2 12.4L9 23.4" stroke="#30e0b0" stroke-width="4.2" stroke-linecap="round"/><rect x="33.8" y="15.8" width="19.6" height="4.4" rx="1.6" fill="#30e0b0"/><path d="M66.7 15.3V10.1H72.1M77 10.1H82.4V15.3M82.4 20.2V25.4H77M72.1 25.4H66.7V20.2" stroke="#30e0b0" stroke-width="3.6"/></svg>
<span id="t66" class="t" style="top:1131.24px;font-size:22px;line-height:22px;color:#30e4b4;font-family:'Noto Sans CJK SC','Noto Sans CJK JP','Liberation Sans',sans-serif;letter-spacing:0.681px;left:105.21px;">modifiers</span>
<svg style="position:absolute;left:1327px;top:1131.3px" width="19" height="24" viewBox="0 0 19 24"><path d="M2 0.8H16.3V4.6H13.7V9.2L17.8 14V15.7H11.3V20.5L9.6 23L7.9 20.5V15.7H0.9V14L4.8 9.2V4.6H2Z" fill="#c8c8c8"/></svg>
<div style="position:absolute;left:3px;top:1161px;width:1345px;height:220px;background:#ffffff;overflow:hidden;"></div>
<div style="position:absolute;left:3px;top:1161px;width:55px;height:220px;background:#d6d6d6;"></div>
<div style="position:absolute;left:58px;top:1161px;width:1.6px;height:220px;background:#18d49c;"></div>
<div style="position:absolute;left:58px;top:1161px;width:1.6px;height:1.2px;background:#ff4040;"></div>
<svg style="position:absolute;left:59px;top:1161px" width="1289" height="220" viewBox="59 1161 1289 220"><rect x="59.6" y="1169.85" width="1288.4" height="1.5" fill="#e9e9e9"/><rect x="59.6" y="1169.95" width="4.2" height="1.3" fill="#bcbcbc"/><rect x="59.6" y="1221.25" width="1288.4" height="1.5" fill="#e9e9e9"/><rect x="59.6" y="1221.35" width="4.2" height="1.3" fill="#bcbcbc"/><rect x="59.6" y="1272.65" width="1288.4" height="1.5" fill="#e9e9e9"/><rect x="59.6" y="1272.75" width="4.2" height="1.3" fill="#bcbcbc"/><rect x="59.6" y="1324.05" width="1288.4" height="1.5" fill="#e9e9e9"/><rect x="59.6" y="1324.15" width="4.2" height="1.3" fill="#bcbcbc"/><rect x="59.6" y="1374.65" width="1288.4" height="1.5" fill="#e9e9e9"/><rect x="59.6" y="1374.75" width="4.2" height="1.3" fill="#bcbcbc"/><path d="M59.6 1274.9H901.5L902.6 1246H1072.2L1073.3 1273.4" fill="none" stroke="#000" stroke-width="1.9"/><rect x="59.6" y="1256.1" width="1288.4" height="1.8" fill="#0000ff"/><rect x="59.6" y="1272.1" width="1288.4" height="2.7" fill="#9e544c"/><rect x="59.6" y="1374.8" width="1288.4" height="2.1" fill="#ff10c0"/></svg>
<span id="t67" class="t" style="top:1161.16px;font-size:18px;line-height:18px;color:#000;font-family:'Noto Sans CJK SC','Noto Sans CJK JP','Liberation Sans',sans-serif;letter-spacing:1.800px;left:41.81px;">2</span>
<span id="t68" class="t" style="top:1212.56px;font-size:18px;line-height:18px;color:#000;font-family:'Noto Sans CJK SC','Noto Sans CJK JP','Liberation Sans',sans-serif;letter-spacing:1.800px;left:23.23px;">1.5</span>
<span id="t69" class="t" style="top:1263.96px;font-size:18px;line-height:18px;color:#000;font-family:'Noto Sans CJK SC','Noto Sans CJK JP','Liberation Sans',sans-serif;letter-spacing:1.800px;left:41.81px;">1</span>
<span id="t70" class="t" style="top:1315.36px;font-size:18px;line-height:18px;color:#000;font-family:'Noto Sans CJK SC','Noto Sans CJK JP','Liberation Sans',sans-serif;letter-spacing:1.800px;left:23.23px;">0.5</span>
<span id="t71" class="t" style="top:1365.96px;font-size:18px;line-height:18px;color:#000;font-family:'Noto Sans CJK SC','Noto Sans CJK JP','Liberation Sans',sans-serif;letter-spacing:1.800px;left:41.81px;">0</span>
<div style="position:absolute;left:1348px;top:124px;width:20.7px;height:1256.7px;background:#d8d8d8;"></div>
<div style="position:absolute;left:1351px;top:125.8px;width:15.9px;height:1247.8px;background:#b0b0b0;border-radius:8px;"></div>
<div style="position:absolute;left:3px;top:1380.7px;width:1366px;height:1.2px;background:#484848;"></div>
<div style="position:absolute;left:3px;top:1381.7px;width:1367.2px;height:168.3px;background:#f0f0f0;border-radius:0 0 0 7px;"></div>
<div style="position:absolute;left:3px;top:1381.9px;width:1367.2px;height:1.2px;background:#a4a4a4;"></div>
<div style="position:absolute;left:3px;top:1383.1px;width:1365.8px;height:35.7px;background:#696969;box-sizing:border-box;border:1.3px solid #464646;"></div>
<div style="position:absolute;left:57.3px;top:1382.6px;width:1.6px;height:36.7px;background:#484848;"></div>
<div style="position:absolute;left:1347px;top:1382.6px;width:1.6px;height:36.7px;background:#484848;"></div>
<span id="t72" class="t" style="top:1391.03px;font-size:19px;line-height:19px;color:#000;font-family:'Noto Sans CJK SC','Noto Sans CJK JP','Liberation Sans',sans-serif;letter-spacing:1.439px;left:655.14px;">13.094</span>
<svg style="position:absolute;left:725px;top:1383.8999999999999px" width="28" height="32" viewBox="0 0 28 32"><path d="M2.6 3.2L23.9 15.6L2.6 28Z" fill="#000" stroke="#000" stroke-width="3.4" stroke-linejoin="round"/></svg>
<span id="t73" class="t" style="top:1424.03px;font-size:19px;line-height:19px;color:#000;font-family:'Noto Sans CJK SC','Noto Sans CJK JP','Liberation Sans',sans-serif;letter-spacing:1.435px;left:27.54px;">0.000</span>
<div style="position:absolute;left:54.4px;top:1424.4px;width:3px;height:19.4px;background:rgba(240,70,70,0.85);"></div>
<span id="t74" class="t" style="top:1423.93px;font-size:19px;line-height:19px;color:#000;font-family:'Noto Sans CJK SC','Noto Sans CJK JP','Liberation Sans',sans-serif;letter-spacing:1.160px;left:1315.44px;">13.09</span>
<div style="position:absolute;left:3px;top:1449.2px;width:1365.8px;height:35.7px;background:#696969;box-sizing:border-box;border:1.3px solid #464646;"></div>
<div style="position:absolute;left:57.3px;top:1448.7px;width:1.6px;height:36.7px;background:#484848;"></div>
<div style="position:absolute;left:1347px;top:1448.7px;width:1.6px;height:36.7px;background:#484848;"></div>
<span id="t75" class="t" style="top:1457.13px;font-size:19px;line-height:19px;color:#000;font-family:'Noto Sans CJK SC','Noto Sans CJK JP','Liberation Sans',sans-serif;letter-spacing:1.439px;left:655.14px;">13.094</span>
<svg style="position:absolute;left:725px;top:1450.0px" width="28" height="32" viewBox="0 0 28 32"><path d="M2.6 3.2L23.9 15.6L2.6 28Z" fill="#000" stroke="#000" stroke-width="3.4" stroke-linejoin="round"/></svg>
<div style="position:absolute;left:6px;top:1493.1px;width:1360px;height:14.9px;background:#b0b0b0;border-radius:7.5px;"></div>
<span id="t76" class="t" style="top:1521.29px;font-size:18.4px;line-height:18.4px;color:#000;font-family:'Noto Sans CJK SC','Noto Sans CJK JP','Liberation Sans',sans-serif;letter-spacing:1.098px;left:5.97px;">Current Time (s)</span>
<div style="position:absolute;left:163.6px;top:1511px;width:79.8px;height:38px;background:#ffffff;"></div>
<span id="t77" class="t" style="top:1520.90px;font-size:18.6px;line-height:18.6px;color:#000;font-family:'Noto Sans CJK SC','Noto Sans CJK JP','Liberation Sans',sans-serif;letter-spacing:1.524px;left:167.96px;">0.000 s</span>
<div style="position:absolute;left:590.2px;top:1511px;width:37.7px;height:38px;background:#696969"><svg width="37.7" height="38" viewBox="0 0 37.7 38" style="display:block"><path d="M4.8 7H8.4V28H4.8ZM8.4 17.5L20.6 7.6V27.4ZM20.2 17.5L32.6 7.6V27.4Z" fill="#000" stroke="#000" stroke-width="0.8" stroke-linejoin="round"/></svg></div>
<div style="position:absolute;left:630.2px;top:1511px;width:34.6px;height:38px;background:#696969"><svg width="34.6" height="38" viewBox="0 0 34.6 38" style="display:block"><path d="M6.2 4.4L28 17.6L6.2 30.8Z" fill="#000" stroke="#000" stroke-width="2.6" stroke-linejoin="round"/></svg></div>
<div style="position:absolute;left:667.1px;top:1511px;width:34.7px;height:38px;background:#696969"><svg width="34.7" height="38" viewBox="0 0 34.7 38" style="display:block"><rect x="5" y="5.4" width="24.6" height="24.6" rx="3" fill="#000"/></svg></div>
<div style="position:absolute;left:704.1px;top:1511px;width:37.7px;height:38px;background:#696969"><svg width="37.7" height="38" viewBox="0 0 37.7 38" style="display:block"><path d="M29.3 7H32.9V28H29.3ZM29.3 17.5L17.1 7.6V27.4ZM17.5 17.5L5.1 7.6V27.4Z" fill="#000" stroke="#000" stroke-width="0.8" stroke-linejoin="round"/></svg></div>
<div style="position:absolute;left:744.1px;top:1511px;width:37.7px;height:38px;background:#696969"><svg width="37.7" height="38" viewBox="0 0 37.7 38" style="display:block"><path d="M27.6 10.2A11.6 11.6 0 1 0 26.6 25.5" fill="none" stroke="#e8e8e8" stroke-width="4.2"/><path d="M28.9 3H32.9V15.7H20V12.2Z" fill="#e8e8e8" stroke="#e8e8e8" stroke-width="0.8" stroke-linejoin="round"/></svg></div>
<div style="position:absolute;left:1172.1px;top:1511px;width:41.8px;height:38px;background:#696969"><svg width="41.8" height="38" viewBox="0 0 41.8 38" style="display:block"><circle cx="18.2" cy="14.6" r="9.6" fill="none" stroke="#000" stroke-width="4"/><path d="M25.4 21.6L33.0 29.2" stroke="#000" stroke-width="4.6" stroke-linecap="round"/><path d="M12.8 14.6H23.6M18.2 9.2V20" stroke="#000" stroke-width="3.4"/></svg></div>
<div style="position:absolute;left:1216.2px;top:1511px;width:41.8px;height:38px;background:#696969"><svg width="41.8" height="38" viewBox="0 0 41.8 38" style="display:block"><circle cx="18.2" cy="14.6" r="9.6" fill="none" stroke="#000" stroke-width="4"/><path d="M25.4 21.6L33.0 29.2" stroke="#000" stroke-width="4.6" stroke-linecap="round"/><path d="M12.6 14.6H23.8" stroke="#000" stroke-width="3.4"/></svg></div>
<div style="position:absolute;left:1260.2px;top:1511px;width:43.7px;height:38px;background:#696969"><svg width="43.7" height="38" viewBox="0 0 43.7 38" style="display:block"><circle cx="19.6" cy="14.6" r="9.6" fill="none" stroke="#000" stroke-width="4"/><path d="M26.8 21.6L34.400000000000006 29.2" stroke="#000" stroke-width="4.6" stroke-linecap="round"/><path d="M4.6 11V32M39 11V32" stroke="#000" stroke-width="1.2"/></svg></div>
<div style="position:absolute;left:1306.1px;top:1511px;width:41.8px;height:38px;background:#696969"><svg width="41.8" height="38" viewBox="0 0 41.8 38" style="display:block"><circle cx="18.2" cy="14.6" r="9.6" fill="none" stroke="#000" stroke-width="4"/><path d="M25.4 21.6L33.0 29.2" stroke="#000" stroke-width="4.6" stroke-linecap="round"/></svg></div>
<span id="t78" class="t" style="top:151.54px;font-size:17.6px;line-height:17.6px;color:#fff;font-weight:bold;letter-spacing:-0.017px;left:1399.61px;">Event [Tyger_short]</span>
<span id="t79" class="t" style="top:190.69px;font-size:17.3px;line-height:17.3px;color:#fff;letter-spacing:-0.076px;left:1399.62px;">Path:</span>
<span id="t80" class="t" style="top:190.69px;font-size:17.3px;line-height:17.3px;color:#fff;letter-spacing:0.219px;left:1599.52px;">...p/_test/events/Tyger_short.event</span>
<span id="t81" class="t" style="top:226.40px;font-size:17.3px;line-height:17.3px;color:#fff;letter-spacing:0.554px;left:1399.62px;">Duration:</span>
<span id="t82" class="t" style="top:226.40px;font-size:17.3px;line-height:17.3px;color:#fff;letter-spacing:-0.136px;left:1599.52px;">13.0941s</span>
<span id="t83" class="t" style="top:262.70px;font-size:17.3px;line-height:17.3px;color:#fff;letter-spacing:-0.149px;left:1399.62px;">Frame Rate:</span>
<span id="t84" class="t" style="top:301.20px;font-size:17.3px;line-height:17.3px;color:#fff;letter-spacing:0.382px;left:1399.62px;">Pre-roll:</span>
<span id="t85" class="t" style="top:301.20px;font-size:17.3px;line-height:17.3px;color:#fff;letter-spacing:0.055px;left:1599.52px;">121.046ms</span>
<span id="t86" class="t" style="top:334.10px;font-size:17.3px;line-height:17.3px;color:#fff;letter-spacing:0.374px;left:1399.62px;">Post-roll:</span>
<span id="t87" class="t" style="top:334.10px;font-size:17.3px;line-height:17.3px;color:#fff;letter-spacing:0.055px;left:1599.52px;">239.648ms</span>
<span id="t88" class="t" style="top:366.70px;font-size:17.3px;line-height:17.3px;color:#fff;letter-spacing:0.050px;left:1399.62px;">Phonetic Analysis Score:</span>
<span id="t89" class="t" style="top:366.70px;font-size:17.3px;line-height:17.3px;color:#fff;letter-spacing:-0.084px;left:1599.52px;">85.5355%</span>
<span id="t90" class="t" style="top:399.60px;font-size:17.3px;line-height:17.3px;color:#fff;letter-spacing:0.533px;left:1399.62px;">Animation Updated:</span>
<span id="t91" class="t" style="top:399.60px;font-size:17.3px;line-height:17.3px;color:#e25858;letter-spacing:1.063px;left:1599.52px;">No</span>
<span id="t92" class="t" style="top:432.80px;font-size:17.3px;line-height:17.3px;color:#fff;letter-spacing:-0.063px;left:1399.62px;">Visualizers:</span>
<div style="position:absolute;left:1600px;top:254px;width:276.5px;height:31.5px;background:#434343;box-sizing:border-box;border:1.5px solid;border-color:#1f1f1f #505050 #505050 #1f1f1f;"></div>
<span id="t93" class="t" style="top:262.69px;font-size:17.3px;line-height:17.3px;color:#fff;letter-spacing:1.123px;left:1605.02px;">30</span>
<div style="position:absolute;left:1400px;top:461px;width:476.5px;height:114px;background:#434343;box-sizing:border-box;border:1.5px solid;border-color:#1f1f1f #505050 #505050 #1f1f1f;"></div>
<div style="position:absolute;left:1400px;top:598.8px;width:476px;height:1.8px;background:#b0b0b0;"></div>
<span id="t94" class="t" style="top:616.74px;font-size:17.6px;line-height:17.6px;color:#fff;font-weight:bold;letter-spacing:0.035px;left:1399.61px;">Sequence [modifiers]</span>
<span id="t95" class="t" style="top:655.09px;font-size:17.3px;line-height:17.3px;color:#fff;letter-spacing:0.042px;left:1399.62px;">Type: Irregular Time Series</span>
<div style="position:absolute;left:1403.2px;top:686.3px;width:84.4px;height:30.2px;background:#444;box-sizing:border-box;border:1.3px solid #7a7a7a;"></div>
<span id="t96" class="t" style="top:694.89px;font-size:17.3px;line-height:17.3px;color:#fff;letter-spacing:0.468px;left:1411.02px;">Show All</span>
<div style="position:absolute;left:1488.8px;top:686.3px;width:79.2px;height:30.2px;background:#444;box-sizing:border-box;border:1.3px solid #7a7a7a;"></div>
<span id="t97" class="t" style="top:694.89px;font-size:17.3px;line-height:17.3px;color:#fff;letter-spacing:0.623px;left:1496.82px;">Hide All</span>
<div style="position:absolute;left:1401.8px;top:731px;width:22.2px;height:22px;background:#0000ff;"></div>
<svg style="position:absolute;left:1432.6px;top:731px" width="21" height="20" viewBox="0 0 21 20"><rect x="0.2" y="0" width="20.3" height="19.1" fill="#fff"/><rect x="0.2" y="0" width="19" height="17.8" fill="#a4a4a4"/><rect x="1.6" y="1.4" width="17.5" height="16.3" fill="#4d4d4d"/><path d="M5.4 9.6L9.5 14L16 5.8" fill="none" stroke="#fff" stroke-width="2.7"/></svg>
<span id="t98" class="t" style="top:733.39px;font-size:17.3px;line-height:17.3px;color:#fff;letter-spacing:0.254px;left:1470.02px;">speech_magnitude</span>
<div style="position:absolute;left:1401.8px;top:764px;width:22.2px;height:22px;background:#000000;"></div>
<svg style="position:absolute;left:1432.6px;top:764px" width="21" height="20" viewBox="0 0 21 20"><rect x="0.2" y="0" width="20.3" height="19.1" fill="#fff"/><rect x="0.2" y="0" width="19" height="17.8" fill="#a4a4a4"/><rect x="1.6" y="1.4" width="17.5" height="16.3" fill="#4d4d4d"/><path d="M5.4 9.6L9.5 14L16 5.8" fill="none" stroke="#fff" stroke-width="2.7"/></svg>
<span id="t99" class="t" style="top:766.39px;font-size:17.3px;line-height:17.3px;color:#fff;letter-spacing:0.408px;left:1470.02px;">nonverbal_magnitude</span>
<div style="position:absolute;left:1401.8px;top:797px;width:22.2px;height:22px;background:#ff0000;"></div>
<svg style="position:absolute;left:1432.6px;top:797px" width="21" height="20" viewBox="0 0 21 20"><rect x="0.2" y="0" width="20.3" height="19.1" fill="#fff"/><rect x="0.2" y="0" width="19" height="17.8" fill="#a4a4a4"/><rect x="1.6" y="1.4" width="17.5" height="16.3" fill="#4d4d4d"/><path d="M5.4 9.6L9.5 14L16 5.8" fill="none" stroke="#fff" stroke-width="2.7"/></svg>
<span id="t100" class="t" style="top:799.39px;font-size:17.3px;line-height:17.3px;color:#fff;letter-spacing:-0.124px;left:1470.02px;">speech_speed</span>
<div style="position:absolute;left:1401.8px;top:830px;width:22.2px;height:22px;background:#00ff00;"></div>
<svg style="position:absolute;left:1432.6px;top:830px" width="21" height="20" viewBox="0 0 21 20"><rect x="0.2" y="0" width="20.3" height="19.1" fill="#fff"/><rect x="0.2" y="0" width="19" height="17.8" fill="#a4a4a4"/><rect x="1.6" y="1.4" width="17.5" height="16.3" fill="#4d4d4d"/><path d="M5.4 9.6L9.5 14L16 5.8" fill="none" stroke="#fff" stroke-width="2.7"/></svg>
<span id="t101" class="t" style="top:832.39px;font-size:17.3px;line-height:17.3px;color:#fff;letter-spacing:0.168px;left:1470.02px;">nonverbal_speed</span>
<div style="position:absolute;left:1401.8px;top:863px;width:22.2px;height:22px;background:#ff19c4;"></div>
<svg style="position:absolute;left:1432.6px;top:863px" width="21" height="20" viewBox="0 0 21 20"><rect x="0.2" y="0" width="20.3" height="19.1" fill="#fff"/><rect x="0.2" y="0" width="19" height="17.8" fill="#a4a4a4"/><rect x="1.6" y="1.4" width="17.5" height="16.3" fill="#4d4d4d"/><path d="M5.4 9.6L9.5 14L16 5.8" fill="none" stroke="#fff" stroke-width="2.7"/></svg>
<span id="t102" class="t" style="top:865.39px;font-size:17.3px;line-height:17.3px;color:#fff;letter-spacing:0.509px;left:1470.02px;">hyperarticulation</span>
<div style="position:absolute;left:1401.8px;top:896px;width:22.2px;height:22px;background:#ffd400;"></div>
<svg style="position:absolute;left:1432.6px;top:896px" width="21" height="20" viewBox="0 0 21 20"><rect x="0.2" y="0" width="20.3" height="19.1" fill="#fff"/><rect x="0.2" y="0" width="19" height="17.8" fill="#a4a4a4"/><rect x="1.6" y="1.4" width="17.5" height="16.3" fill="#4d4d4d"/><path d="M5.4 9.6L9.5 14L16 5.8" fill="none" stroke="#fff" stroke-width="2.7"/></svg>
<span id="t103" class="t" style="top:898.39px;font-size:17.3px;line-height:17.3px;color:#fff;letter-spacing:0.436px;left:1470.02px;">jaw_limit</span>
<div style="position:absolute;left:1401.8px;top:929px;width:22.2px;height:22px;background:#005000;"></div>
<svg style="position:absolute;left:1432.6px;top:929px" width="21" height="20" viewBox="0 0 21 20"><rect x="0.2" y="0" width="20.3" height="19.1" fill="#fff"/><rect x="0.2" y="0" width="19" height="17.8" fill="#a4a4a4"/><rect x="1.6" y="1.4" width="17.5" height="16.3" fill="#4d4d4d"/><path d="M5.4 9.6L9.5 14L16 5.8" fill="none" stroke="#fff" stroke-width="2.7"/></svg>
<span id="t104" class="t" style="top:931.39px;font-size:17.3px;line-height:17.3px;color:#fff;letter-spacing:0.115px;left:1470.02px;">expression_frequency</span>
<div style="position:absolute;left:1401.8px;top:962px;width:22.2px;height:22px;background:#8a86ff;"></div>
<svg style="position:absolute;left:1432.6px;top:962px" width="21" height="20" viewBox="0 0 21 20"><rect x="0.2" y="0" width="20.3" height="19.1" fill="#fff"/><rect x="0.2" y="0" width="19" height="17.8" fill="#a4a4a4"/><rect x="1.6" y="1.4" width="17.5" height="16.3" fill="#4d4d4d"/><path d="M5.4 9.6L9.5 14L16 5.8" fill="none" stroke="#fff" stroke-width="2.7"/></svg>
<span id="t105" class="t" style="top:964.39px;font-size:17.3px;line-height:17.3px;color:#fff;letter-spacing:0.336px;left:1470.02px;">blink_frequency</span>
<div style="position:absolute;left:1401.8px;top:995px;width:22.2px;height:22px;background:#a0524a;"></div>
<svg style="position:absolute;left:1432.6px;top:995px" width="21" height="20" viewBox="0 0 21 20"><rect x="0.2" y="0" width="20.3" height="19.1" fill="#fff"/><rect x="0.2" y="0" width="19" height="17.8" fill="#a4a4a4"/><rect x="1.6" y="1.4" width="17.5" height="16.3" fill="#4d4d4d"/><path d="M5.4 9.6L9.5 14L16 5.8" fill="none" stroke="#fff" stroke-width="2.7"/></svg>
<span id="t106" class="t" style="top:997.39px;font-size:17.3px;line-height:17.3px;color:#fff;letter-spacing:0.282px;left:1470.02px;">dart_frequency</span>
</div>
</body></html>
